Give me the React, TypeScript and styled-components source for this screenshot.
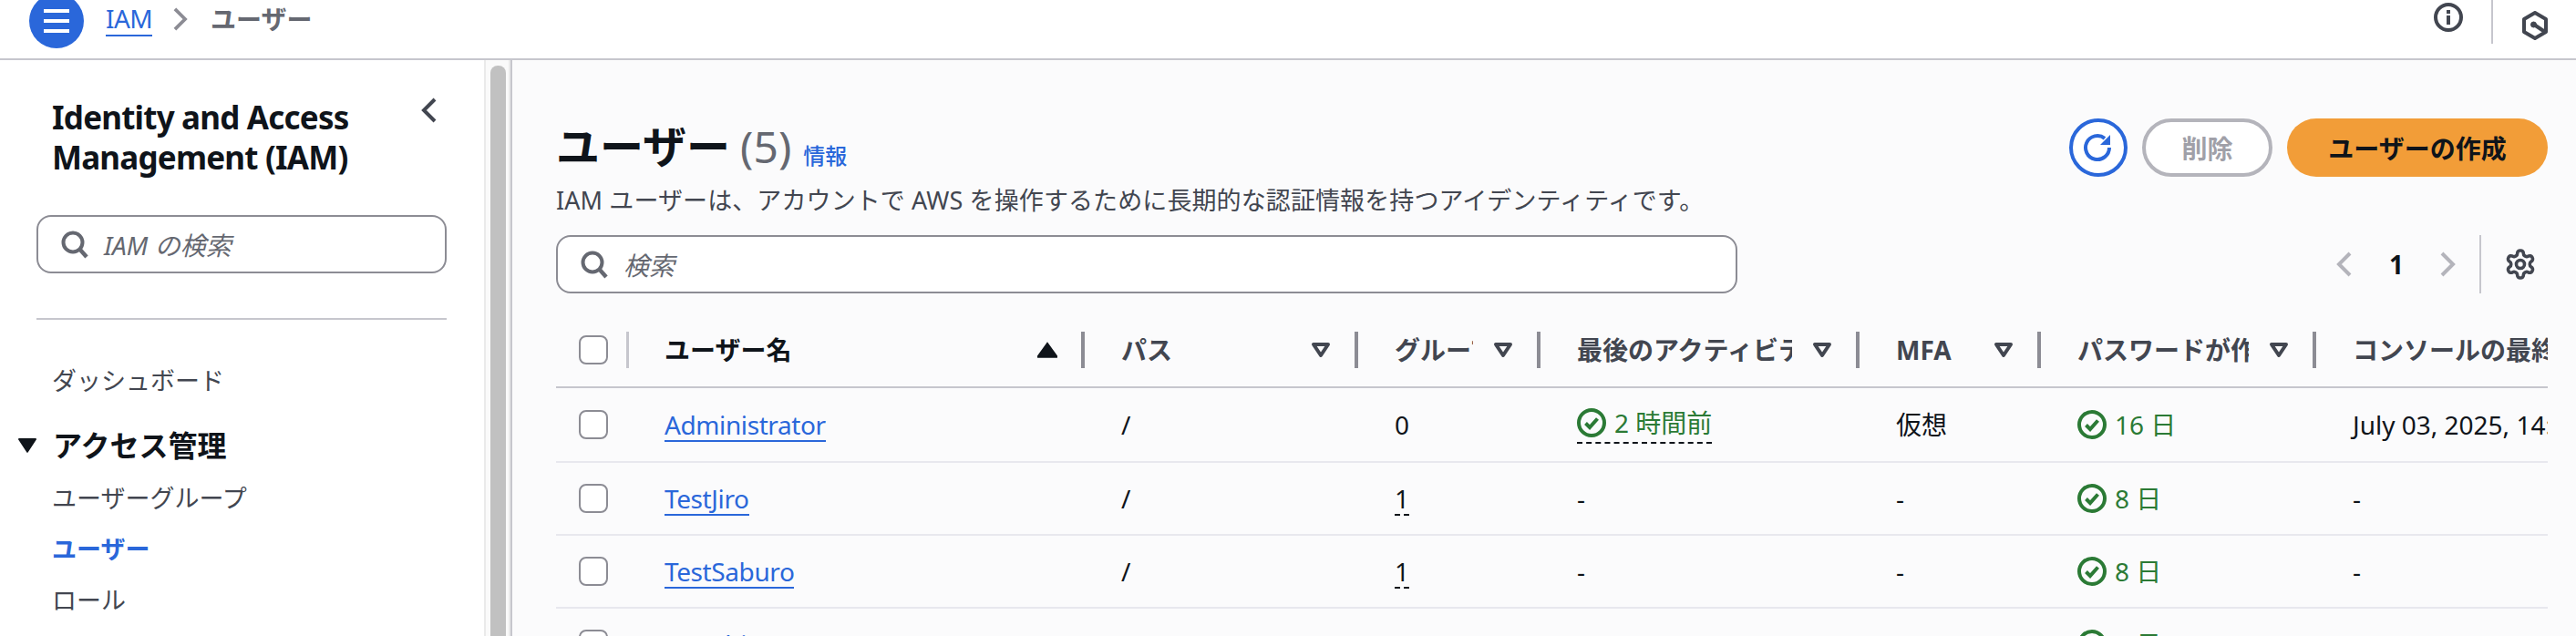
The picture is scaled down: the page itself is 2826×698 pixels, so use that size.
import React from 'react';
import styled, { createGlobalStyle } from 'styled-components';

const GlobalStyle = createGlobalStyle`
  html, body {
    margin: 0;
    padding: 0;
    background: #fff;
  }
  body {
    font-family: 'Noto Sans', 'Noto Sans CJK JP', sans-serif;
    color: #0f141a;
  }
`;

const Page = styled.div`
  width: 2826px;
  height: 698px;
  overflow: hidden;
  display: flex;
  flex-direction: column;
`;

const TopBar = styled.header`
  flex: none;
  height: 64px;
  border-bottom: 2px solid #c6c6cd;
  display: flex;
  align-items: center;
  padding: 0 31px 0 32px;
`;

const MenuButton = styled.button`
  flex: none;
  width: 60px;
  height: 60px;
  margin-bottom: 18px;
  border: none;
  border-radius: 50%;
  background: #2a67da;
  padding: 0;
  display: flex;
  align-items: center;
  justify-content: center;
`;

const Crumbs = styled.nav`
  display: flex;
  align-items: center;
  flex: 1;
  margin-left: 24px;
  margin-bottom: 22px;
  font-size: 28px;
  line-height: 36px;
`;

const CrumbLink = styled.a`
  color: #2a67da;
  text-decoration: none;
  border-bottom: 2px solid #2a67da;
  height: 36px;
  letter-spacing: -0.6px;
`;

const CrumbCurrent = styled.span`
  color: #656871;
  font-weight: 700;
  margin-left: 25px;
`;

const CrumbChevron = styled.span`
  display: flex;
  margin-left: 22px;
`;

const TopDivider = styled.div`
  flex: none;
  width: 2px;
  height: 48px;
  margin: 0 32px 16px 31px;
  background: #c6c6cd;
`;

const InfoGlyph = styled.svg`
  flex: none;
  margin-bottom: 26px;
`;

const ProfileGlyph = styled.svg`
  flex: none;
  margin-bottom: 8px;
`;

const Body = styled.div`
  flex: 1;
  display: flex;
  min-height: 0;
`;

const Sidebar = styled.aside`
  flex: none;
  width: 531px;
  box-sizing: border-box;
  padding: 41px 41px 0 40px;
`;

const SideHead = styled.div`
  display: flex;
  justify-content: space-between;
  padding: 0 10px 0 17px;
`;

const SideTitle = styled.h2`
  margin: 0;
  font-size: 35px;
  line-height: 44px;
  font-weight: 700;
  letter-spacing: -0.8px;
  color: #0f141a;
`;

const SearchBox = styled.div<{ $wide?: boolean }>`
  box-sizing: border-box;
  display: flex;
  align-items: center;
  height: 64px;
  border: 2px solid #8c8c94;
  border-radius: 16px;
  background: #fff;
  padding-left: 24px;
  width: ${(p) => (p.$wide ? '1296px' : '450px')};
`;

const SearchText = styled.span`
  margin-left: 16px;
  font-size: 28px;
  font-style: italic;
  color: #656871;
`;

const SideSearch = styled(SearchBox)`
  margin-top: 41px;
`;

const SideRule = styled.div`
  height: 2px;
  background: #c6c6cd;
  margin-top: 49px;
`;

const SideNav = styled.nav`
  display: flex;
  flex-direction: column;
  padding-left: 17px;
  margin-top: 47px;
`;

const NavItem = styled.a<{ $active?: boolean }>`
  font-size: 27px;
  line-height: 40px;
  margin-bottom: 16px;
  color: ${(p) => (p.$active ? '#2a67da' : '#424650')};
  font-weight: ${(p) => (p.$active ? 700 : 400)};
`;

const NavGroup = styled.div`
  display: flex;
  align-items: center;
  margin: 13px 0 16px -37px;
  font-size: 32px;
  line-height: 44px;
  font-weight: 700;
  color: #0f141a;
`;

const NavCaret = styled.svg`
  margin-right: 18px;
`;

const Scrollbar = styled.div`
  flex: none;
  width: 29px;
  box-sizing: border-box;
  background: #fafafa;
  border-left: 2px solid #eaeaea;
  border-right: 2px solid #eaeaea;
  padding: 6px 3px 0 5px;
`;

const ScrollThumb = styled.div`
  height: 100%;
  background: #c1c1c1;
  border-radius: 8px 8px 0 0;
`;

const Main = styled.main`
  flex: 1;
  min-width: 0;
  background: #fbfbfc;
  border-left: 2px solid #c6c6cd;
  padding: 0 31px 0 48px;
`;

const TitleRow = styled.div`
  display: flex;
  justify-content: space-between;
  padding-top: 59px;
`;

const Heading = styled.div`
  display: flex;
  flex-direction: column;
`;

const TitleLine = styled.div`
  display: flex;
  align-items: baseline;
  height: 75px;
`;

const Title = styled.h1`
  margin: 0;
  font-size: 48px;
  line-height: 72px;
  font-weight: 700;
  color: #0f141a;
`;

const Count = styled.span`
  font-size: 48px;
  color: #656871;
  margin-left: 11px;
`;

const InfoLink = styled.a`
  align-self: flex-end;
  font-size: 24px;
  line-height: 36px;
  color: #2a67da;
  font-weight: 500;
  margin: 0 0 11px 13px;
`;

const Description = styled.p`
  margin: 0;
  font-size: 27px;
  line-height: 40px;
  color: #424650;
  letter-spacing: 0.1px;
`;

const Actions = styled.div`
  display: flex;
  gap: 16px;
  margin-top: 5px;
`;

const RefreshButton = styled.button`
  box-sizing: border-box;
  width: 64px;
  height: 64px;
  border: 4px solid #2a67da;
  border-radius: 50%;
  background: #fff;
  padding: 0;
  display: flex;
  align-items: center;
  justify-content: center;
`;

const PillButton = styled.button<{ $primary?: boolean }>`
  box-sizing: border-box;
  height: 64px;
  border-radius: 32px;
  font-family: inherit;
  font-size: 28px;
  font-weight: 700;
  padding: 0;
  width: ${(p) => (p.$primary ? '286px' : '143px')};
  border: ${(p) => (p.$primary ? 'none' : '4px solid #b4b4bb')};
  background: ${(p) => (p.$primary ? '#f29d38' : '#fff')};
  color: ${(p) => (p.$primary ? '#0f141a' : '#a0a0a8')};
`;

const FilterRow = styled.div`
  display: flex;
  justify-content: space-between;
  align-items: center;
  margin-top: 18px;
`;

const Pager = styled.div`
  display: flex;
  align-items: center;
  padding-right: 12px;
`;

const PageNumber = styled.span`
  font-size: 28px;
  font-weight: 700;
  color: #0f141a;
  margin: 0 39px 0 40px;
`;

const PagerDivider = styled.div`
  width: 2px;
  height: 64px;
  background: #c6c6cd;
  margin: 0 25px 0 26px;
`;

const Table = styled.div`
  margin-top: 29px;
  overflow: hidden;
`;

const columns = '79px 501px 300px 200px 350px 199px 302px 1fr';

const HeadRow = styled.div`
  display: grid;
  grid-template-columns: ${columns};
  height: 66px;
  padding-bottom: 7px;
  border-bottom: 2px solid #c6c6cd;
  align-items: center;
`;

const Row = styled.div`
  display: grid;
  grid-template-columns: ${columns};
  height: 78px;
  border-bottom: 2px solid #e8e8ee;
  align-items: center;
`;

const FirstRow = styled(Row)`
  height: 80px;
`;

const CheckCell = styled.div`
  display: flex;
  align-items: center;
  padding-left: 25px;
  gap: 20px;
`;

const CheckBox = styled.span`
  box-sizing: border-box;
  flex: none;
  width: 32px;
  height: 32px;
  border: 2px solid #8c8c94;
  border-radius: 8px;
  background: #fff;
`;

const HeadDivider = styled.span<{ $light?: boolean }>`
  flex: none;
  width: ${(p) => (p.$light ? '3px' : '4px')};
  height: 40px;
  background: ${(p) => (p.$light ? '#c6c6cd' : '#8c8c94')};
`;

const HeadCell = styled.div`
  display: flex;
  align-items: center;
  padding-left: 40px;
  min-width: 0;
`;

const HeadLabel = styled.span<{ $sorted?: boolean; $last?: boolean }>`
  flex: 1;
  min-width: 0;
  overflow: hidden;
  white-space: nowrap;
  font-size: 28px;
  line-height: 40px;
  font-weight: 700;
  margin-right: ${(p) => (p.$last ? '0' : '22px')};
  color: ${(p) => (p.$sorted ? '#0f141a' : '#424650')};
`;

const SortSlot = styled.span`
  flex: none;
  display: flex;
  margin-right: 26px;
`;

const Cell = styled.div`
  padding-left: 40px;
  font-size: 28px;
  line-height: 36px;
  color: #0f141a;
  white-space: nowrap;
  min-width: 0;
`;

const UserLink = styled.a`
  display: inline-block;
  color: #2a67da;
  border-bottom: 2px solid #2a67da;
  line-height: 34px;
  letter-spacing: -0.4px;
`;

const DashedValue = styled.span`
  display: inline-block;
  border-bottom: 2px dashed #0f141a;
  line-height: 34px;
`;

const Status = styled.span`
  display: inline-flex;
  align-items: center;
  gap: 9px;
  color: #2b7a35;
  vertical-align: top;
`;

const StatusUnderlined = styled(Status)`
  border-bottom: 2px dashed #0f141a;
  padding-bottom: 3px;
`;

const SearchIcon = () => (
  <svg width="32" height="32" viewBox="0 0 32 32" fill="none" stroke="#656871" strokeWidth="4">
    <circle cx="14" cy="14" r="10.5" />
    <path d="M21.5 21.5 29 30" strokeWidth="4.5" />
  </svg>
);

const Chevron = ({ dir, color, w = 18, h = 28 }: { dir: 'left' | 'right'; color: string; w?: number; h?: number }) => (
  <svg width={w} height={h} viewBox="0 0 18 28" fill="none" stroke={color} strokeWidth="4">
    <path d={dir === 'left' ? 'M15 2 3 14l12 12' : 'M3 2l12 12L3 26'} />
  </svg>
);

const FilterIcon = () => (
  <svg width="22" height="18" viewBox="0 0 22 18" fill="none" stroke="#424650" strokeWidth="4" strokeLinejoin="round">
    <path d="M3 3h16l-8 12z" />
  </svg>
);

const SortedIcon = () => (
  <svg width="22" height="18" viewBox="0 0 20 16" fill="#0f141a">
    <path d="M10 0 20 14a1.2 1.2 0 0 1-1 2H1a1.2 1.2 0 0 1-1-2z" />
  </svg>
);

const StatusIcon = () => (
  <svg width="32" height="32" viewBox="0 0 32 32" fill="none" stroke="#2b7a35">
    <circle cx="16" cy="16" r="14" strokeWidth="4" />
    <path d="M9.5 16.5 14 21l8.5-9.5" strokeWidth="4" />
  </svg>
);

type Column = { label: string; sorted?: boolean };

const headers: Column[] = [
  { label: 'ユーザー名', sorted: true },
  { label: 'パス' },
  { label: 'グループ' },
  { label: '最後のアクティビティ' },
  { label: 'MFA' },
  { label: 'パスワードが作成' },
];

const users = [
  { name: 'TestJiro', age: '8 日' },
  { name: 'TestSaburo', age: '8 日' },
];

export default function App() {
  return (
    <Page>
      <GlobalStyle />
      <TopBar>
        <MenuButton aria-label="menu">
          <svg width="28" height="26" viewBox="0 0 28 26" fill="#fff">
            <rect y="0" width="28" height="4" />
            <rect y="11" width="28" height="4" />
            <rect y="22" width="28" height="4" />
          </svg>
        </MenuButton>
        <Crumbs>
          <CrumbLink>IAM</CrumbLink>
          <CrumbChevron>
            <Chevron dir="right" color="#8c8c94" w={17} h={26} />
          </CrumbChevron>
          <CrumbCurrent>ユーザー</CrumbCurrent>
        </Crumbs>
        <InfoGlyph width="32" height="32" viewBox="0 0 32 32" fill="none">
          <circle cx="16" cy="16" r="14" stroke="#424650" strokeWidth="4" />
          <rect x="14" y="14" width="4" height="10" fill="#424650" />
          <rect x="14" y="8" width="4" height="4" fill="#424650" />
        </InfoGlyph>
        <TopDivider />
        <ProfileGlyph width="28" height="32" viewBox="0 0 28 32" fill="none" stroke="#424650" strokeWidth="4">
          <path d="M14 2 26 9v14l-12 7-12-7V9z" strokeLinejoin="round" />
          <path d="M13 15l12 8" />
          <circle cx="12.5" cy="15" r="3" fill="#424650" strokeWidth="1" />
        </ProfileGlyph>
      </TopBar>
      <Body>
        <Sidebar>
          <SideHead>
            <SideTitle>
              Identity and Access
              <br />
              Management (IAM)
            </SideTitle>
            <Chevron dir="left" color="#424650" />
          </SideHead>
          <SideSearch>
            <SearchIcon />
            <SearchText>IAM の検索</SearchText>
          </SideSearch>
          <SideRule />
          <SideNav>
            <NavItem>ダッシュボード</NavItem>
            <NavGroup>
              <NavCaret width="20" height="16" viewBox="0 0 20 16" fill="#0f141a">
                <path d="M1 0h18a1 1 0 0 1 .8 1.6l-9 13.6a1 1 0 0 1-1.6 0L.2 1.6A1 1 0 0 1 1 0z" />
              </NavCaret>
              アクセス管理
            </NavGroup>
            <NavItem>ユーザーグループ</NavItem>
            <NavItem $active>ユーザー</NavItem>
            <NavItem>ロール</NavItem>
          </SideNav>
        </Sidebar>
        <Scrollbar>
          <ScrollThumb />
        </Scrollbar>
        <Main>
          <TitleRow>
            <Heading>
              <TitleLine>
                <Title>ユーザー</Title>
                <Count>(5)</Count>
                <InfoLink>情報</InfoLink>
              </TitleLine>
              <Description>
                IAM ユーザーは、アカウントで AWS を操作するために長期的な認証情報を持つアイデンティティです。
              </Description>
            </Heading>
            <Actions>
              <RefreshButton aria-label="refresh">
                <svg width="34" height="34" viewBox="0 0 34 34" fill="none" stroke="#2a67da" strokeWidth="4">
                  <path d="M29 17a13 13 0 1 1-5-10.2" />
                  <path d="M30 3v11H19z" fill="#2a67da" strokeWidth="0" />
                </svg>
              </RefreshButton>
              <PillButton>削除</PillButton>
              <PillButton $primary>ユーザーの作成</PillButton>
            </Actions>
          </TitleRow>
          <FilterRow>
            <SearchBox $wide>
              <SearchIcon />
              <SearchText>検索</SearchText>
            </SearchBox>
            <Pager>
              <Chevron dir="left" color="#b4b4bb" />
              <PageNumber>1</PageNumber>
              <Chevron dir="right" color="#b4b4bb" />
              <PagerDivider />
              <svg width="36" height="36" viewBox="0 0 24 24" fill="none" stroke="#424650" strokeWidth="2.4" strokeLinecap="round" strokeLinejoin="round">
                <path d="M12.22 2h-.44a2 2 0 0 0-2 2v.18a2 2 0 0 1-1 1.73l-.43.25a2 2 0 0 1-2 0l-.15-.08a2 2 0 0 0-2.73.73l-.22.38a2 2 0 0 0 .73 2.73l.15.1a2 2 0 0 1 1 1.72v.51a2 2 0 0 1-1 1.74l-.15.09a2 2 0 0 0-.73 2.73l.22.38a2 2 0 0 0 2.73.73l.15-.08a2 2 0 0 1 2 0l.43.25a2 2 0 0 1 1 1.73V20a2 2 0 0 0 2 2h.44a2 2 0 0 0 2-2v-.18a2 2 0 0 1 1-1.73l.43-.25a2 2 0 0 1 2 0l.15.08a2 2 0 0 0 2.73-.73l.22-.39a2 2 0 0 0-.73-2.73l-.15-.08a2 2 0 0 1-1-1.74v-.5a2 2 0 0 1 1-1.74l.15-.09a2 2 0 0 0 .73-2.73l-.22-.38a2 2 0 0 0-2.73-.73l-.15.08a2 2 0 0 1-2 0l-.43-.25a2 2 0 0 1-1-1.73V4a2 2 0 0 0-2-2z" />
                <circle cx="12" cy="12" r="3" />
              </svg>
            </Pager>
          </FilterRow>
          <Table>
            <HeadRow>
              <CheckCell>
                <CheckBox />
                <HeadDivider $light />
              </CheckCell>
              {headers.map((h) => (
                <HeadCell key={h.label}>
                  <HeadLabel $sorted={h.sorted}>{h.label}</HeadLabel>
                  <SortSlot>{h.sorted ? <SortedIcon /> : <FilterIcon />}</SortSlot>
                  <HeadDivider />
                </HeadCell>
              ))}
              <HeadCell>
                <HeadLabel $last>コンソールの最終サインイン</HeadLabel>
              </HeadCell>
            </HeadRow>
            <FirstRow>
              <CheckCell>
                <CheckBox />
              </CheckCell>
              <Cell>
                <UserLink>Administrator</UserLink>
              </Cell>
              <Cell>/</Cell>
              <Cell>0</Cell>
              <Cell>
                <StatusUnderlined>
                  <StatusIcon />2 時間前
                </StatusUnderlined>
              </Cell>
              <Cell>仮想</Cell>
              <Cell>
                <Status>
                  <StatusIcon />16 日
                </Status>
              </Cell>
              <Cell>July 03, 2025, 14:32 (UTC+09:00)</Cell>
            </FirstRow>
            {users.map((u) => (
              <Row key={u.name}>
                <CheckCell>
                  <CheckBox />
                </CheckCell>
                <Cell>
                  <UserLink>{u.name}</UserLink>
                </Cell>
                <Cell>/</Cell>
                <Cell>
                  <DashedValue>1</DashedValue>
                </Cell>
                <Cell>-</Cell>
                <Cell>-</Cell>
                <Cell>
                  <Status>
                    <StatusIcon />
                    {u.age}
                  </Status>
                </Cell>
                <Cell>-</Cell>
              </Row>
            ))}
            <Row>
              <CheckCell>
                <CheckBox />
              </CheckCell>
              <Cell>
                <UserLink>TestShiro</UserLink>
              </Cell>
              <Cell>/</Cell>
              <Cell>0</Cell>
              <Cell>-</Cell>
              <Cell>-</Cell>
              <Cell>
                <Status>
                  <StatusIcon />8 日
                </Status>
              </Cell>
              <Cell>-</Cell>
            </Row>
          </Table>
        </Main>
      </Body>
    </Page>
  );
}
